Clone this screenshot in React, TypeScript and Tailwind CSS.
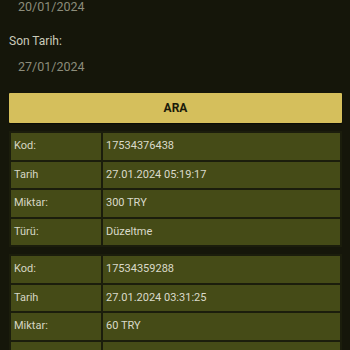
import React from "react";

const rows1 = [
  ["Kod:", "17534376438"],
  ["Tarih", "27.01.2024 05:19:17"],
  ["Miktar:", "300 TRY"],
  ["Türü:", "Düzeltme"],
];
const rows2 = [
  ["Kod:", "17534359288"],
  ["Tarih", "27.01.2024 03:31:25"],
  ["Miktar:", "60 TRY"],
  ["Türü:", "Düzeltme"],
];

function Table({ rows, className }: { rows: string[][]; className?: string }) {
  return (
    <div className={"mx-[9px] w-[333px] bg-[#1b1d0c] p-[2px] flex flex-col gap-[2px] " + (className ?? "")}>
      {rows.map(([k, v]) => (
        <div key={k} className="flex gap-[2px] h-[26.5px]">
          <div className="w-[90px] bg-[#454b17] flex items-center pl-[3px] text-[11px] text-[#d6d6c4]">{k}</div>
          <div className="flex-1 bg-[#454b17] flex items-center pl-[3px] text-[11px] text-[#dadaca]">{v}</div>
        </div>
      ))}
    </div>
  );
}

export default function App() {
  return (
    <div className="w-[350px] h-[350px] overflow-hidden bg-[#15160a] font-['Roboto',sans-serif]">
      <div className="pl-[18px] h-[14px] leading-[14px] text-[12.5px] text-[#8c8c7a]">20/01/2024</div>
      <div className="mt-[20px] pl-[9px] h-[14px] leading-[14px] text-[12px] text-[#cbcbba]">Son Tarih:</div>
      <div className="mt-[12px] pl-[18px] h-[14px] leading-[14px] text-[12.5px] text-[#8c8c7a]">27/01/2024</div>
      <div className="mt-[19px] mx-[9px] w-[333px] h-[30px] bg-[#d5bf5c] rounded-[1px] flex items-center justify-center text-[12px] font-bold text-[#1a1a0a] shadow-[0_1px_1px_rgba(0,0,0,0.5)]">
        ARA
      </div>
      <Table rows={rows1} className="mt-[8px]" />
      <Table rows={rows2} className="mt-[7px]" />
    </div>
  );
}
